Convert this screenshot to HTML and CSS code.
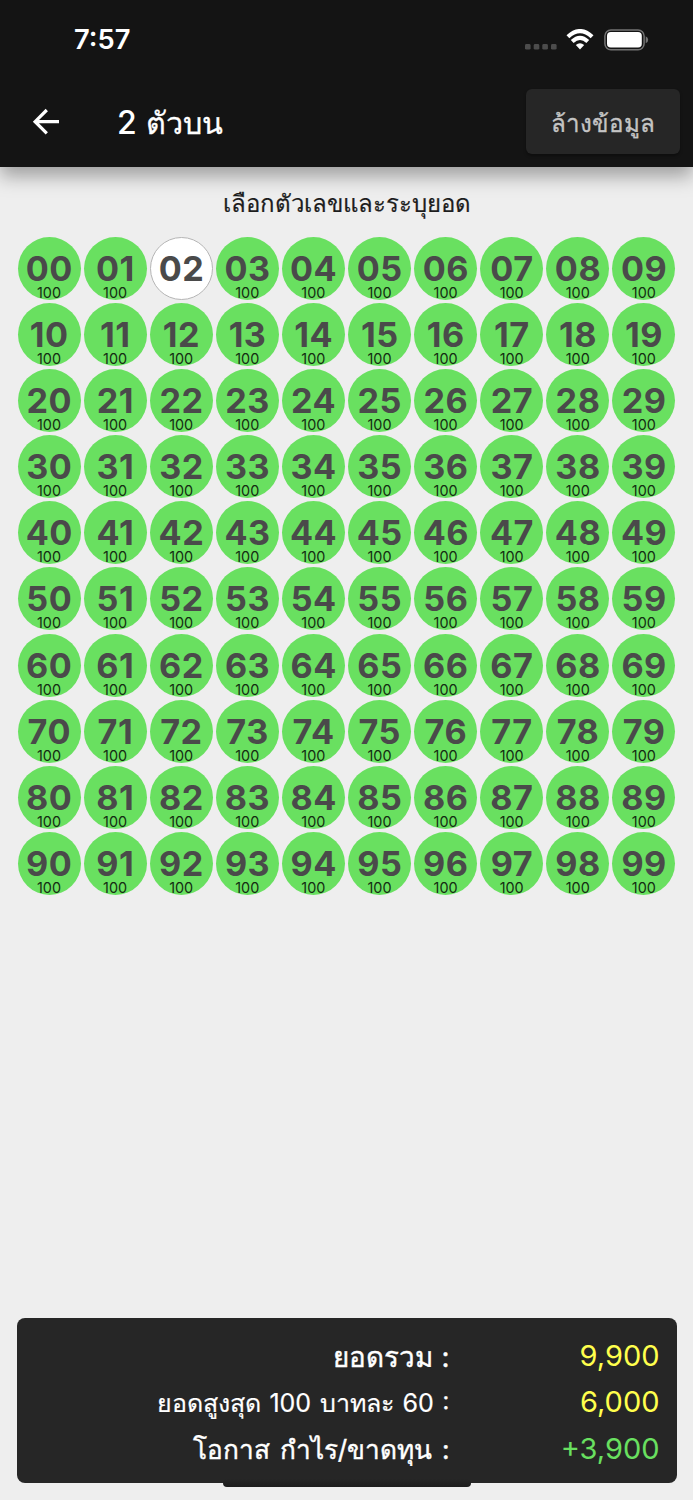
FILE: index.html
```
<!DOCTYPE html>
<html lang="th">
<head>
<meta charset="utf-8">
<title>2 ตัวบน</title>
<link rel="stylesheet" href="styles.css">
</head>
<body>
<div class="screen">
  <header class="header">
    <div class="status">
      <span class="time">7:57</span>
      <div class="status-icons">
        <svg class="dots" width="32" height="6" viewBox="0 0 32 6" fill="#4c4c4c"><rect width="5.6" height="5.6" rx="1.4"/><rect x="8.7" width="5.6" height="5.6" rx="1.4"/><rect x="17.3" width="5.6" height="5.6" rx="1.4"/><rect x="26" width="5.6" height="5.6" rx="1.4"/></svg>
        <svg class="wifi" width="28" height="21" viewBox="0 0 28 21" fill="none" stroke="#fff" stroke-width="4.1"><path d="M1.9 7.8Q14-3.6 26.1 7.8"/><path d="M6.2 12.5Q14 5.3 21.8 12.5"/><path d="M9.8 16.1Q14 12.6 18.2 16.1L14 20.4Z" fill="#fff" stroke="none"/></svg>
        <svg class="battery" width="46" height="22" viewBox="0 0 46 22"><rect x=".9" y=".9" width="39.2" height="19.8" rx="6" fill="none" stroke="#737373" stroke-width="1.5"/><rect x="3" y="3" width="34.8" height="15.5" rx="3.8" fill="#fff"/><path d="M41.7 7.3Q44.2 8.3 44.2 10.8T41.7 14.3Z" fill="#737373"/></svg>
      </div>
    </div>
    <div class="appbar">
      <svg class="back" width="28" height="28" viewBox="0 0 28 28" fill="none" stroke="#fff" stroke-width="3.2"><path d="M27 13.7H3.5M14.8 2L3.1 13.7L14.8 25.4"/></svg>
      <h1 class="title"><span class="title-num">2</span><span>ตัวบน</span></h1>
      <button class="clear">ล้างข้อมูล</button>
    </div>
  </header>
  <main class="main">
    <p class="hint">เลือกตัวเลขและระบุยอด</p>
    <div class="grid" id="grid"></div>
  </main>
  <section class="summary">
    <div class="row"><span class="label strong">ยอดรวม :</span><span class="value">9,900</span></div>
    <div class="row"><span class="label small">ยอดสูงสุด 100 บาทละ 60 :</span><span class="value">6,000</span></div>
    <div class="row"><span class="label strong long">โอกาส กำไร/ขาดทุน :</span><span class="value gain">+3,900</span></div>
    <div class="home"></div>
  </section>
</div>
<script src="grid.js"></script>
</body>
</html>
```
FILE: styles.css
```
* { box-sizing: border-box; }
body { margin: 0; background: #eee; font-family: Inter, sans-serif; }
.screen { width: 693px; height: 1500px; display: flex; flex-direction: column; overflow: hidden; }
.header { height: 167px; flex: none; background: #141414; box-shadow: 0 9px 18px rgba(0,0,0,.34); clip-path: inset(0 0 -40px 0); }
.status { height: 78px; padding: 0 43px 0 74px; display: flex; justify-content: space-between; }
.time { color: #fff; font-size: 27.3px; font-weight: 600; line-height: 32px; padding-top: 24px; }
.status-icons { display: flex; align-items: flex-start; }
.dots { margin: 44px 9px 0 0; }
.wifi { margin: 29px 10px 0 0; }
.battery { margin-top: 29px; }
.appbar { height: 89px; display: flex; align-items: flex-start; padding: 11px 13px 0 32px; }
.back { margin-top: 19px; }
.title { margin: 0 auto 0 57px; padding-top: 14px; color: #fff; font-size: 30.5px; line-height: 40px; font-weight: 500; display: flex; gap: 9px; -webkit-text-stroke: .3px #fff; }
.title-num { font-size: 32px; -webkit-text-stroke: 0; }
.clear { width: 154px; height: 65px; border: 0; border-radius: 6px; padding: 3px 0 0; background: #262626; color: #c4c4c4; font: 24.2px Inter, sans-serif; -webkit-text-stroke: .3px #c4c4c4; box-shadow: 0 2px 3px rgba(0,0,0,.35); }
.main { flex: 1; }
.hint { margin: 0; padding-top: 17px; height: 69.5px; line-height: 40px; text-align: center; font-size: 24px; color: #1d1d1d; -webkit-text-stroke: .2px #1d1d1d; }
.grid { display: grid; grid-template-columns: repeat(10, 63px); gap: 3.18px 3.1px; padding-left: 17.5px; }
.cell { height: 63px; border-radius: 50%; background: #69e060; display: flex; flex-direction: column; align-items: center; }
.cell.off { background: #fff; border: 1.3px solid #b5b5b5; }
.n { font-size: 34.2px; font-weight: 700; color: #4a4a4a; line-height: 34px; padding-top: 15px; letter-spacing: .5px; margin-right: -.5px; }
.off .n { padding-top: 14px; }
.amt { font-size: 14.4px; line-height: 14px; color: #142d12; }
.summary { height: 165px; flex: none; margin: 0 16.5px 16.8px; padding: 15px 17px 0; border-radius: 8px; background: #262626; position: relative; }
.row { height: 46.2px; display: grid; grid-template-columns: 416px 1fr; line-height: 46px; text-align: right; color: #fff; white-space: nowrap; }
.label { padding-top: 1px; }
.label.strong { font-size: 27.8px; word-spacing: 1px; -webkit-text-stroke: .4px #fff; }
.label.strong.long { font-size: 26.2px; word-spacing: 2.5px; }
.label.small { font-size: 25px; word-spacing: 1.6px; -webkit-text-stroke: .2px #fff; }
.value { font-size: 29px; line-height: 45px; color: #ffff4d; }
.value.gain { color: #69e060; }
.home { position: absolute; left: 206.5px; bottom: -3.5px; width: 247.5px; height: 8px; border-radius: 4px; background: linear-gradient(#262626, #1c1c1c); }
```
FILE: grid.js
```
const grid = document.getElementById('grid');
for (let i = 0; i < 100; i++) {
  const empty = i === 2;
  const cell = document.createElement('div');
  cell.className = empty ? 'cell off' : 'cell';
  cell.innerHTML = `<span class="n">${String(i).padStart(2, '0')}</span>` + (empty ? '' : '<span class="amt">100</span>');
  grid.append(cell);
}
```
